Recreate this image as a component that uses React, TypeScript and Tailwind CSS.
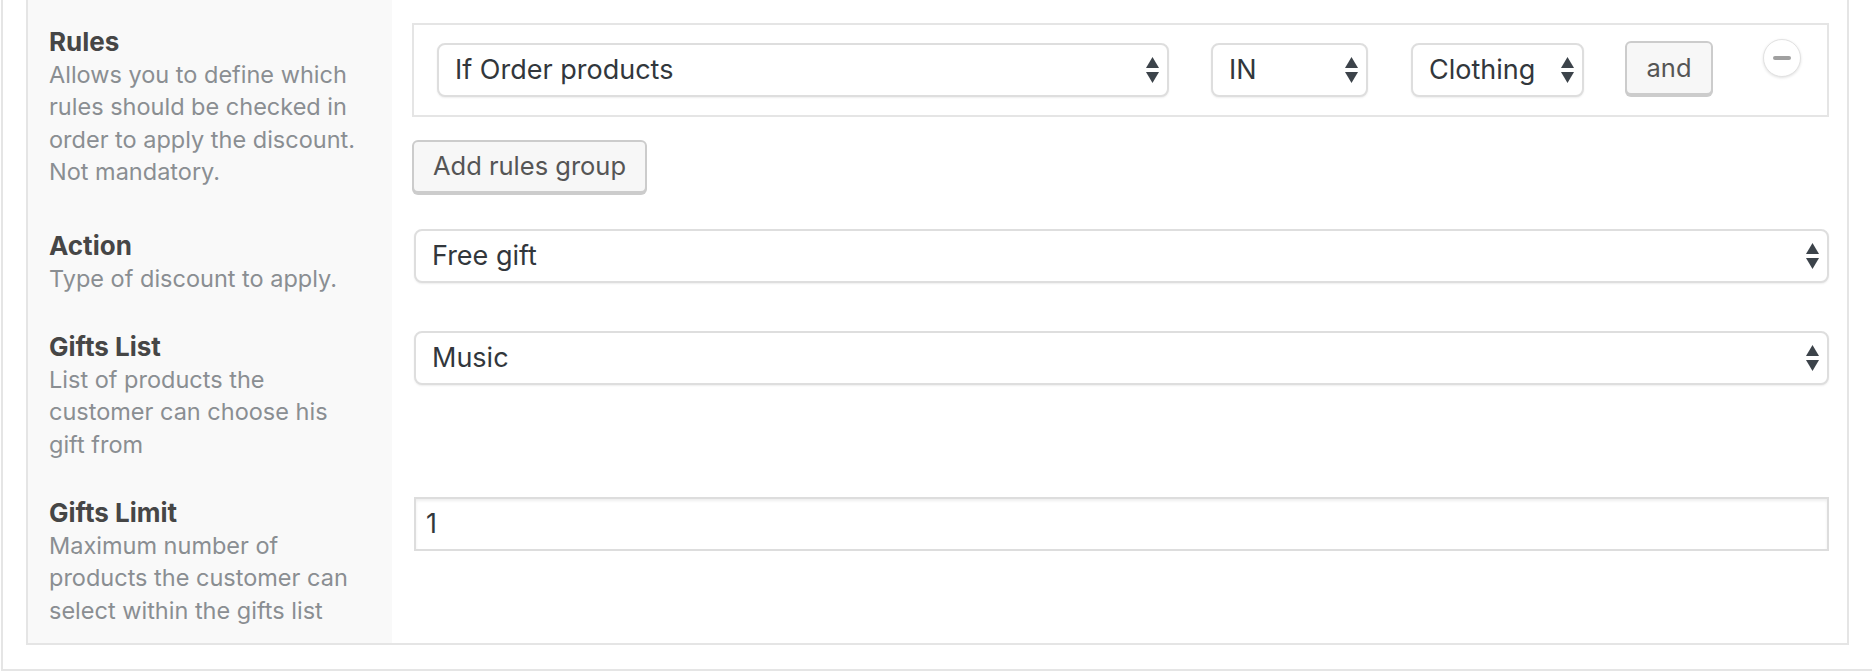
import React from 'react';

const Arrows = () => (
  <svg width="13" height="26" viewBox="0 0 13 26" className="shrink-0">
    <polygon points="0,11 6.5,0 13,11" fill="#3c434a" />
    <polygon points="0,15 13,15 6.5,26" fill="#3c434a" />
  </svg>
);

function Select({ value, className = '' }: { value: string; className?: string }) {
  return (
    <div
      className={`h-[54px] flex items-center justify-between bg-white border-2 border-[#dedede] rounded-[8px] shadow-[0_1px_2px_rgba(0,0,0,0.07)] pl-[16px] pr-[8px] text-[27px] text-[#32373c] ${className}`}
    >
      <span>{value}</span>
      <Arrows />
    </div>
  );
}

function Label({ title, lines }: { title: string; lines: string[] }) {
  return (
    <>
      <div className="text-[26px] leading-[35px] font-bold text-[#464646]">{title}</div>
      <div className="text-[23.5px] leading-[32.3px] text-[#8a8e92]">
        {lines.map((l, i) => (
          <div key={i} className="whitespace-nowrap">{l}</div>
        ))}
      </div>
    </>
  );
}

export default function App() {
  return (
    <div className="w-[1872px] h-[672px] bg-white overflow-hidden font-['Inter',sans-serif]">
      <div className="ml-[1px] h-[671px] border-l-2 border-b-2 border-[#e5e5e5] pl-[23px] pb-[24px]">
        <div className="w-[1823px] h-full border-x-2 border-b-2 border-[#e5e5e5] flex flex-col">
          {/* Rules */}
          <div className="flex h-[208px] shrink-0">
            <div className="w-[364px] shrink-0 bg-[#f9f9f9] pl-[21px] pt-[24px]">
              <Label
                title="Rules"
                lines={['Allows you to define which', 'rules should be checked in', 'order to apply the discount.', 'Not mandatory.']}
              />
            </div>
            <div className="flex-1 pl-[20px] pr-[18px] pt-[23px]">
              <div className="h-[94px] border-2 border-[#e5e5e5] flex items-start pl-[23px] pt-[18px]">
                <Select value="If Order products" className="w-[732px]" />
                <Select value="IN" className="w-[157px] ml-[42px]" />
                <Select value="Clothing" className="w-[173px] ml-[43px]" />
                <button className="ml-[41px] mt-[-2px] w-[88px] h-[54px] bg-[#f7f7f7] border-2 border-[#cccccc] rounded-[6px] shadow-[0_2px_0_#cccccc] text-[25.5px] text-[#555555]">
                  and
                </button>
                <div className="ml-[50px] mt-[-4px] w-[38px] h-[38px] rounded-full bg-white border border-[#e2e2e2] shadow-[0_1px_3px_rgba(0,0,0,0.12)] flex items-center justify-center">
                  <div className="w-[18px] h-[4px] rounded-full bg-[#a0a0a0]" />
                </div>
              </div>
              <button className="mt-[23px] w-[235px] h-[53px] bg-[#f7f7f7] border-2 border-[#cccccc] rounded-[6px] shadow-[0_2px_0_#cccccc] text-[25.5px] text-[#555555]">
                Add rules group
              </button>
            </div>
          </div>

          {/* Action */}
          <div className="flex h-[101px] shrink-0">
            <div className="w-[364px] shrink-0 bg-[#f9f9f9] pl-[21px] pt-[20px]">
              <Label title="Action" lines={['Type of discount to apply.']} />
            </div>
            <div className="flex-1 pl-[22px] pr-[18px] pt-[21px]">
              <Select value="Free gift" />
            </div>
          </div>

          {/* Gifts List */}
          <div className="flex h-[166px] shrink-0">
            <div className="w-[364px] shrink-0 bg-[#f9f9f9] pl-[21px] pt-[20px]">
              <Label title="Gifts List" lines={['List of products the', 'customer can choose his', 'gift from']} />
            </div>
            <div className="flex-1 pl-[22px] pr-[18px] pt-[22px]">
              <Select value="Music" />
            </div>
          </div>

          {/* Gifts Limit */}
          <div className="flex flex-1">
            <div className="w-[364px] shrink-0 bg-[#f9f9f9] pl-[21px] pt-[20px]">
              <Label
                title="Gifts Limit"
                lines={['Maximum number of', 'products the customer can', 'select within the gifts list']}
              />
            </div>
            <div className="flex-1 pl-[22px] pr-[18px] pt-[22px]">
              <div className="h-[54px] flex items-center bg-white border-2 border-[#dddddd] shadow-[inset_0_2px_3px_rgba(0,0,0,0.07)] pl-[10px] text-[27px] text-[#32373c]">
                1
              </div>
            </div>
          </div>
        </div>
      </div>
    </div>
  );
}
